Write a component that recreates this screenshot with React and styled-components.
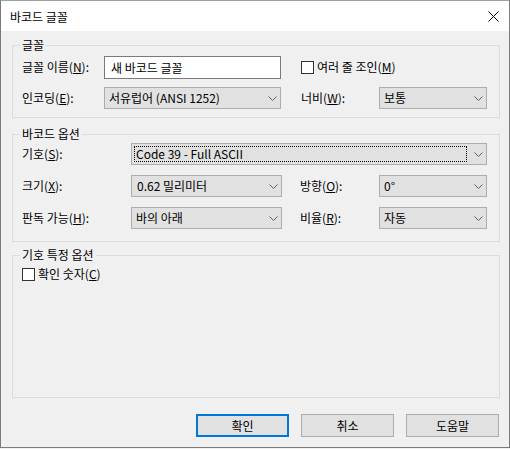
import React from "react";
import styled, { createGlobalStyle } from "styled-components";

const GlobalStyle = createGlobalStyle`
  html, body {
    margin: 0;
    padding: 0;
    background: #f0f0f0;
  }
  body {
    font-family: "Noto Sans CJK KR", "Noto Sans", sans-serif;
    font-size: 12px;
    color: #000;
  }
`;

const Window = styled.div`
  box-sizing: border-box;
  width: 510px;
  height: 448px;
  border: 1px solid #7a7a7a;
  border-top-color: #a0a0a0;
  background: #f0f0f0;
  display: flex;
  flex-direction: column;
`;

const TitleBar = styled.div`
  height: 30px;
  background: #fff;
  display: flex;
  align-items: center;
  justify-content: space-between;
  padding: 0 10px 0 9px;
  font-size: 12px;
`;

const CloseIcon = styled.svg`
  width: 11px;
  height: 11px;
`;

const Content = styled.div`
  display: flex;
  flex-direction: column;
  padding: 6px 9px 0 11px;
`;

const Group = styled.fieldset`
  box-sizing: border-box;
  margin: 0 0 ${(p) => p.$after || 0}px 0;
  padding: ${(p) => p.$top || 0}px 11px ${(p) => p.$bottom || 0}px 9px;
  border: 1px solid #dcdcdc;
  min-width: 0;
  height: ${(p) => (p.$height ? `${p.$height}px` : "auto")};
`;

const Legend = styled.legend`
  padding: 0 2px;
  margin-left: -2px;
  line-height: 16px;
  height: 16px;
`;

const Grid = styled.div`
  display: grid;
  grid-template-columns: ${(p) => p.$cols};
  grid-auto-rows: 22px;
  row-gap: ${(p) => p.$gap}px;
  align-items: center;
`;

const Label = styled.span`
  white-space: nowrap;
  line-height: 16px;
  grid-column: ${(p) => p.$col || "auto"};
`;

const TextBox = styled.div`
  box-sizing: border-box;
  height: 23px;
  margin-top: 1px;
  border: 1px solid #7a7a7a;
  background: #fff;
  padding: 0 6px;
  display: flex;
  align-items: center;
`;

const Combo = styled.div`
  box-sizing: border-box;
  height: 22px;
  border: 1px solid #adadad;
  background: #e1e1e1;
  display: flex;
  align-items: center;
  padding: 0 0 0 ${(p) => p.$pad || 4}px;
  grid-column: ${(p) => p.$col || "auto"};
`;

const ComboText = styled.span`
  flex: 1;
  white-space: nowrap;
  line-height: 16px;
`;

const FocusRing = styled.span`
  flex: 1;
  align-self: stretch;
  margin: 2px 0 2px -1px;
  border: 1px dotted #000;
  display: flex;
  align-items: center;
  padding-left: 1px;
  line-height: 16px;
`;

const Arrow = styled.svg`
  width: 9px;
  height: 5px;
  margin: 0 3px 0 7px;
  flex: none;
`;

const CheckRow = styled.label`
  display: flex;
  align-items: center;
  gap: 3px;
  line-height: 16px;
  grid-column: ${(p) => p.$col || "auto"};
`;

const Box = styled.span`
  box-sizing: border-box;
  width: 13px;
  height: 13px;
  border: 1px solid #333;
  background: #fff;
  flex: none;
`;

const ButtonRow = styled.div`
  display: flex;
  justify-content: flex-end;
  gap: 12px;
  margin-top: 16px;
  padding-right: 1px;
`;

const Button = styled.button`
  box-sizing: border-box;
  width: 93px;
  height: 23px;
  font: inherit;
  color: #000;
  background: #e1e1e1;
  border: ${(p) => (p.$default ? "2px solid #0078d7" : "1px solid #adadad")};
  padding: 0;
`;

const Chevron = () => (
  <Arrow viewBox="0 0 9 5">
    <polyline points="0.5,0.5 4.5,4.5 8.5,0.5" fill="none" stroke="#606060" strokeWidth="1" />
  </Arrow>
);

const Select = ({ children, col, pad }) => (
  <Combo $col={col} $pad={pad}>
    <ComboText>{children}</ComboText>
    <Chevron />
  </Combo>
);

export default function App() {
  return (
    <>
      <GlobalStyle />
      <Window>
        <TitleBar>
          <span>바코드 글꼴</span>
          <CloseIcon viewBox="0 0 11 11">
            <path d="M0.5 0.5 L10.5 10.5 M10.5 0.5 L0.5 10.5" stroke="#000" strokeWidth="1" />
          </CloseIcon>
        </TitleBar>
        <Content>
          <Group $top={3} $bottom={8} $after={8}>
            <Legend>글꼴</Legend>
            <Grid $cols="82px 177px 20px 78px 108px" $gap={9}>
              <Label>
                글꼴 이름(<u>N</u>):
              </Label>
              <TextBox>새 바코드 글꼴</TextBox>
              <CheckRow $col="4 / span 2">
                <Box />
                <span>
                  여러 줄 조인(<u>M</u>)
                </span>
              </CheckRow>
              <Label>
                인코딩(<u>E</u>):
              </Label>
              <Select>서유럽어 (ANSI 1252)</Select>
              <Label $col="4">
                너비(<u>W</u>):
              </Label>
              <Select>보통</Select>
            </Grid>
          </Group>

          <Group $top={1} $bottom={12} $after={5}>
            <Legend>바코드 옵션</Legend>
            <Grid $cols="109px 151px 18px 79px 108px" $gap={10}>
              <Label>
                기호(<u>S</u>):
              </Label>
              <Combo $col="2 / span 4" $pad={3}>
                <FocusRing>Code 39 - Full ASCII</FocusRing>
                <Chevron />
              </Combo>
              <Label>
                크기(<u>X</u>):
              </Label>
              <Select pad={5}>0.62 밀리미터</Select>
              <Label $col="4">
                방향(<u>O</u>):
              </Label>
              <Select pad={4}>0°</Select>
              <Label>
                판독 가능(<u>H</u>):
              </Label>
              <Select pad={4}>바의 아래</Select>
              <Label $col="4">
                비율(<u>R</u>):
              </Label>
              <Select pad={4}>자동</Select>
            </Grid>
          </Group>

          <Group $top={3} $height={151}>
            <Legend>기호 특정 옵션</Legend>
            <CheckRow>
              <Box />
              <span>
                확인 숫자(<u>C</u>)
              </span>
            </CheckRow>
          </Group>

          <ButtonRow>
            <Button $default>확인</Button>
            <Button>취소</Button>
            <Button>도움말</Button>
          </ButtonRow>
        </Content>
      </Window>
    </>
  );
}
